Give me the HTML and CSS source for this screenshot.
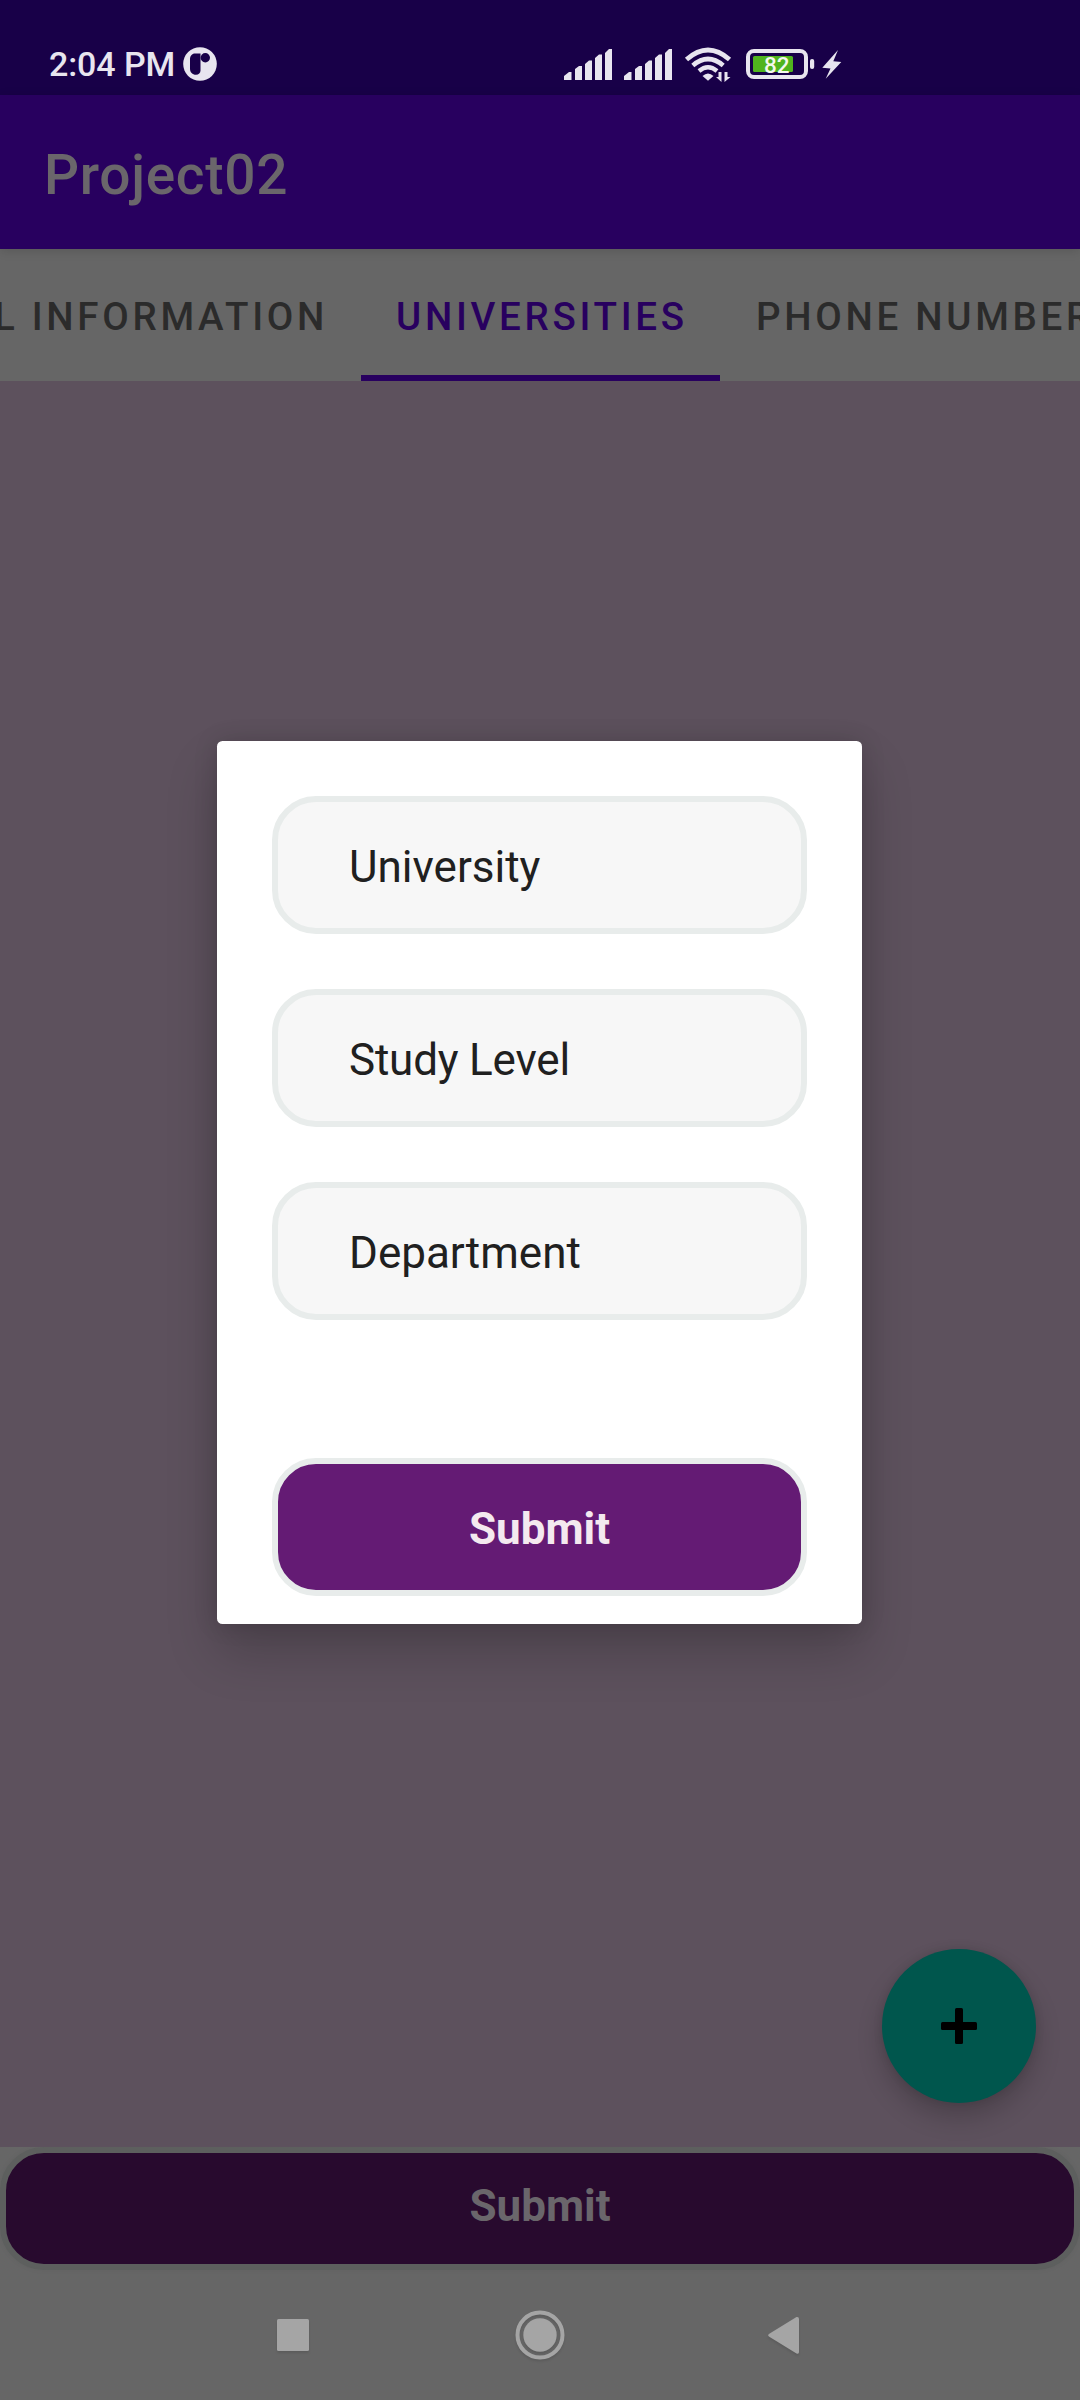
FILE: index.html
```html
<!DOCTYPE html>
<html lang="en">
<head>
<meta charset="utf-8">
<title>Project02</title>
<link rel="stylesheet" href="styles.css">
</head>
<body>
<div class="screen">
  <header class="status-bar">
    <div class="clock">
      <span class="time">2:04 PM</span>
      <svg class="notification" viewBox="183 47 34 34"><circle cx="200" cy="64" r="16.800" fill="#e8e5ef"/><path d="M195 53.500h5.500v17c0 2.600-1.800 4.300-4.500 4.300-3.600 0-6-2.400-6-6v-9.300c0-3.600 2-6 5-6z" fill="#180048"/><circle cx="205.300" cy="57.700" r="4.700" fill="#180048"/></svg>
    </div>
    <svg class="indicators" viewBox="560 40 290 48">
      <g fill="#e8e5ef">
        <path id="bars" d="M564 80v-4l5-4h2.500v8zM575 80v-11l4-3h3v14zM585 80v-16l4-3.500h3v19.500zM595 80v-22l4-3.500h3v25.500zM605 80v-27l4-4h3v31z"/>
        <use href="#bars" x="60"/>
        <path d="M702.500 76q5.500-5 11 0l-5.500 4.800z"/>
        <path d="M718.500 72h3v10l-5.500-5h2.500zM724.500 72h3v5h3l-6 5z"/>
        <rect x="810" y="59" width="4.200" height="10" rx="2"/>
        <path d="M838 50L822.300 67.700l8.200.8-4.800 10.300L841.300 62l-8-.8z"/>
      </g>
      <g fill="none" stroke="#e8e5ef">
        <path d="M686.500 59.500Q708 40.500 729.500 59.500" stroke-width="4.800"/>
        <path d="M692.800 65.500Q708 52.500 723.200 65.500" stroke-width="4.600"/>
        <path d="M699 71Q708 63.500 717 71" stroke-width="4.400"/>
        <rect x="748" y="51" width="58" height="26" rx="6" stroke-width="4"/>
      </g>
      <rect x="753" y="56" width="40" height="16" rx="1.500" fill="#50b41e"/>
      <text class="charge" x="764" y="72.500">82</text>
    </svg>
  </header>

  <div class="app-bar">Project02</div>

  <nav class="tabs">
    <div class="tab before">PERSONAL INFORMATION</div>
    <div class="tab active">UNIVERSITIES</div>
    <div class="tab after">PHONE NUMBERS</div>
  </nav>

  <main class="content">
    <button class="fab" aria-label="Add">
      <svg viewBox="0 0 36 36"><rect x="14" width="8" height="36" rx="1.500"/><rect y="14" width="36" height="8" rx="1.500"/></svg>
    </button>
  </main>

  <button class="submit page-submit">Submit</button>

  <footer class="nav-bar">
    <svg viewBox="0 0 60 60"><rect x="14" y="14" width="32" height="32" rx="1.500"/></svg>
    <svg class="home" viewBox="0 0 60 60"><circle cx="30" cy="30" r="22.500" class="ring"/><circle cx="30" cy="30" r="16.700"/></svg>
    <svg viewBox="0 0 60 60"><path d="M16.300 28.700L43.500 12Q46 11.500 46 14v33Q46 49.500 43.500 48.500L16.300 31.800Q14 30.300 16.300 28.700z"/></svg>
  </footer>

  <section class="dialog">
    <div class="field">University</div>
    <div class="field level">Study Level</div>
    <div class="field">Department</div>
    <button class="submit dialog-submit">Submit</button>
  </section>
</div>
</body>
</html>
```
FILE: styles.css
```css
* {
  box-sizing: border-box;
}

body {
  margin: 0;
  font-family: Roboto, "Liberation Sans", sans-serif;
}

button {
  font-family: inherit;
  margin: 0;
}

.screen {
  position: relative;
  display: flex;
  flex-direction: column;
  width: 1080px;
  height: 2400px;
  overflow: hidden;
  background: #666;
}

.status-bar {
  display: flex;
  justify-content: space-between;
  height: 95px;
  padding: 40px 230px 0 49px;
  background: #180048;
}

.clock {
  display: flex;
  align-items: center;
  gap: 8px;
  height: 48px;
}

.time {
  font-size: 34px;
  font-weight: 500;
  line-height: 50px;
  letter-spacing: -0.1px;
  color: #e8e5ef;
}

.notification {
  width: 34px;
  height: 34px;
}

.indicators {
  width: 290px;
  height: 48px;
}

.charge {
  font-size: 22.5px;
  font-weight: 500;
  fill: #f4f8ee;
}

.app-bar {
  z-index: 1;
  height: 154px;
  padding-left: 44px;
  background: #28005f;
  box-shadow: 0 2px 10px rgba(0, 0, 0, 0.14);
  font-size: 55px;
  font-weight: 500;
  line-height: 160px;
  letter-spacing: 0.7px;
  color: #6a666b;
}

.tabs {
  display: grid;
  grid-template: 132px / 361px 359px 360px;
}

.tab {
  padding: 0 33px;
  font-size: 38.5px;
  font-weight: 500;
  line-height: 136px;
  letter-spacing: 3.7px;
  white-space: nowrap;
  color: #2b2b2b;
}

.tab.before {
  display: flex;
  justify-content: flex-end;
}

.tab.active {
  padding-left: 35px;
  border-bottom: 6px solid #28005f;
  color: #28005f;
}

.tab.after {
  padding-left: 36px;
}

.content {
  position: relative;
  flex: 1;
  background: #5d515d;
}

.fab {
  position: absolute;
  right: 44px;
  bottom: 44px;
  display: grid;
  place-items: center;
  width: 154px;
  height: 154px;
  padding: 0;
  border: 0;
  border-radius: 50%;
  background: #00564d;
  box-shadow: 0 14px 26px rgba(0, 0, 0, 0.2), 0 0 10px rgba(0, 0, 0, 0.1);
}

.fab svg {
  width: 36px;
  height: 36px;
}

.submit {
  border: 6px solid #e8eceb;
  border-radius: 44px;
  background: #641b74;
  font-size: 44px;
  font-weight: 700;
  line-height: 52px;
  text-align: center;
  color: #f4e9ef;
}

.page-submit {
  height: 123px;
  padding: 0 0 6px;
  border-color: #5d5f5e;
  background: #280a2e;
  color: #6a666b;
  box-shadow: 0 0 6px rgba(0, 0, 0, 0.04);
}

.nav-bar {
  display: flex;
  justify-content: space-between;
  height: 130px;
  padding: 35px 267px 0 263px;
}

.nav-bar svg {
  width: 60px;
  height: 60px;
  fill: #a5a5a5;
  filter: drop-shadow(0 2px 1px rgba(0, 0, 0, 0.1));
}

.nav-bar .home {
  margin-left: 4px;
}

.nav-bar .ring {
  fill: none;
  stroke: #a5a5a5;
  stroke-width: 4;
}

.dialog {
  position: absolute;
  z-index: 2;
  left: 217px;
  top: 741px;
  display: flex;
  flex-direction: column;
  gap: 55px;
  width: 645px;
  height: 883px;
  padding: 55px;
  border-radius: 5.5px;
  background: #fff;
  box-shadow: 0 28px 52px rgba(0, 0, 0, 0.2), 0 0 24px rgba(0, 0, 0, 0.14);
}

.field {
  flex: none;
  height: 138px;
  padding: 0 71px;
  border: 6px solid #e8eceb;
  border-radius: 44px;
  background: #f7f7f7;
  font-size: 44px;
  line-height: 130px;
  color: #202020;
}

.field.level {
  letter-spacing: -0.2px;
}

.dialog-submit {
  flex: none;
  height: 138px;
  margin-top: 83px;
  padding: 4px 0 0;
}
```
